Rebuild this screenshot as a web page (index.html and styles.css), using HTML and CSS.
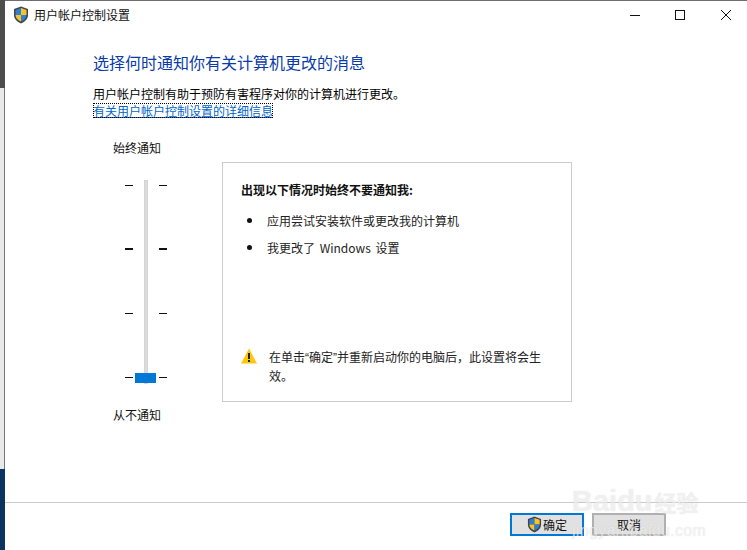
FILE: index.html
```html
<!DOCTYPE html>
<html lang="zh-CN">
<head>
<meta charset="utf-8">
<title>用户帐户控制设置</title>
<link rel="stylesheet" href="styles.css">
</head>
<body>
<div class="desktop-strip">
  <div class="strip-dark"></div>
  <div class="strip-light"></div>
  <div class="strip-navy"></div>
</div>
<main class="window">
  <header class="titlebar">
    <svg class="shield" viewBox="0 0 16 18" width="16" height="18" aria-hidden="true">
      <path d="M8 .5 1 3v6c0 4 3 6.800 7 8.500 4-1.700 7-4.500 7-8.500V3z" fill="#3d4650"/>
      <path d="M8 2 8 9H2.500V4z" fill="#2f7fd6"/>
      <path d="M8 2 13.500 4V9H8z" fill="#f7c325"/>
      <path d="M2.500 9H8v6.500C5 14.200 2.700 12.300 2.500 9z" fill="#f7c325"/>
      <path d="M8 9h5.500C13.300 12.300 11 14.200 8 15.500z" fill="#2f7fd6"/>
    </svg>
    <span class="title-text">用户帐户控制设置</span>
    <div class="controls">
      <svg class="ctl" viewBox="0 0 10 10" width="10" height="10" aria-hidden="true"><path d="M0 5.500h10" stroke="#111" fill="none"/></svg>
      <svg class="ctl ctl-max" viewBox="0 0 10 10" width="10" height="10" aria-hidden="true"><rect x=".5" y=".5" width="9" height="9" stroke="#111" fill="none"/></svg>
      <svg class="ctl" viewBox="0 0 10 10" width="10" height="10" aria-hidden="true"><path d="M0 0l10 10M10 0 0 10" stroke="#111" fill="none"/></svg>
    </div>
  </header>

  <section class="content">
    <h1 class="heading">选择何时通知你有关计算机更改的消息</h1>
    <p class="desc">用户帐户控制有助于预防有害程序对你的计算机进行更改。</p>
    <a class="link" href="#">有关用户帐户控制设置的详细信息</a>

    <div class="settings">
      <div class="slider-col">
        <div class="slider-label">始终通知</div>
        <div class="slider">
          <div class="track"></div>
          <div class="thumb"></div>
          <div class="tick-row"><i class="tick"></i><i class="tick"></i></div>
          <div class="tick-row thick"><i class="tick"></i><i class="tick"></i></div>
          <div class="tick-row"><i class="tick"></i><i class="tick"></i></div>
          <div class="tick-row"><i class="tick"></i><i class="tick"></i></div>
        </div>
        <div class="slider-label bottom">从不通知</div>
      </div>

      <div class="panel">
        <div class="panel-title">出现以下情况时始终不要通知我:</div>
        <ul class="panel-list">
          <li>应用尝试安装软件或更改我的计算机</li>
          <li class="mixed">我更改了 Windows 设置</li>
        </ul>
        <div class="notice">
          <svg class="warn" viewBox="0 0 16 16" width="16" height="16" aria-hidden="true">
            <path d="M8 .5 16 15.500H0z" fill="#fcc80f"/>
            <rect x="7" y="5" width="2" height="6" fill="#222"/>
            <rect x="7" y="12" width="2" height="2" fill="#222"/>
          </svg>
          <p class="notice-text">在单击<span class="quote">“</span>确定<span class="quote">”</span>并重新启动你的电脑后，此设置将会生效。</p>
        </div>
      </div>
    </div>
  </section>

  <footer class="footer">
    <button class="btn primary" type="button">
      <svg class="btn-shield" viewBox="0 0 16 18" width="15" height="17" aria-hidden="true">
        <path d="M8 .5 1 3v6c0 4 3 6.800 7 8.500 4-1.700 7-4.500 7-8.500V3z" fill="#3d4650"/>
        <path d="M8 2 8 9H2.500V4z" fill="#2f7fd6"/>
        <path d="M8 2 13.500 4V9H8z" fill="#f7c325"/>
        <path d="M2.500 9H8v6.500C5 14.200 2.700 12.300 2.500 9z" fill="#f7c325"/>
        <path d="M8 9h5.500C13.300 12.300 11 14.200 8 15.500z" fill="#2f7fd6"/>
      </svg>确定</button>
    <button class="btn" type="button">取消</button>
  </footer>
</main>
<div class="watermark">
  <div class="wm-logo">Baidu<span class="wm-cn">经验</span></div>
  <div class="wm-url">jingyan.baidu.com</div>
</div>
</body>
</html>
```

FILE: styles.css
```css
* { box-sizing: border-box; }
html, body { margin: 0; height: 100%; }
body {
  width: 747px;
  height: 550px;
  overflow: hidden;
  display: flex;
  position: relative;
  background: #fff;
  color: #000;
  font-family: "Noto Sans CJK SC", "Noto Sans", sans-serif;
  font-size: 12px;
}
.desktop-strip { width: 5px; flex: none; display: flex; flex-direction: column; }
.strip-dark { height: 88px; background: #4d4d4d; }
.strip-light { height: 381px; background: #e6e8ea; border-right: 1px solid #777; }
.strip-navy { flex: 1; background: #0b3560; }

.window {
  flex: 1;
  display: flex;
  flex-direction: column;
  min-width: 0;
  background: #fff;
  border-top: 1px solid #6e6e6e;
}
.titlebar {
  height: 29px;
  flex: none;
  display: flex;
  align-items: center;
  padding-left: 8px;
}
.shield { flex: none; margin-right: 5px; margin-top: -1px; }
.title-text { font-size: 12px; line-height: 16px; color: #111; margin-top: -2px; }
.controls {
  margin-left: auto;
  display: flex;
  gap: 35px;
  padding-right: 16px;
  margin-top: -1px;
}
.ctl { display: block; }
.ctl-max { margin-right: 1px; }

.content { flex: 1; padding: 22px 0 0 88px; min-height: 0; }
.heading {
  margin: 0;
  font-size: 16px;
  font-weight: 400;
  line-height: 20px;
  color: #0b3ba8;
}
.desc { margin: 14px 0 0; line-height: 16px; }
.link {
  display: inline-block;
  line-height: 15px;
  color: #0066cc;
  text-decoration: underline;
  outline: 1px dotted #000;
  outline-offset: -1px;
}

.settings { display: flex; margin-top: 14px; }
.slider-col { width: 129px; flex: none; padding-left: 20px; display: flex; flex-direction: column; }
.slider-label { line-height: 16px; color: #111; margin-top: 7px; }
.slider-label.bottom { margin-top: 23px; }
.slider {
  position: relative;
  width: 42px;
  height: 204px;
  margin: 24px 0 0 12px;
  display: flex;
  flex-direction: column;
  gap: 63px;
  padding-top: 5px;
}
.track {
  position: absolute;
  left: 19px;
  top: 0;
  bottom: 0;
  width: 4px;
  background: #dcdcdc;
  border: 1px solid #d4d6d6;
}
.thumb {
  position: absolute;
  left: 10px;
  bottom: 1px;
  width: 21px;
  height: 10px;
  background: #0078d7;
}
.tick-row { display: flex; justify-content: space-between; }
.tick { display: block; width: 8px; height: 1px; background: #111; }
.thick { margin-top: -1px; }
.thick .tick { height: 2px; }

.panel {
  width: 350px;
  height: 240px;
  margin-top: 29px;
  border: 1px solid #ccc;
  padding: 19px 18px 0;
  display: flex;
  flex-direction: column;
}
.panel-title { font-weight: 700; line-height: 16px; color: #111; }
.panel-list { margin: 15px 0 0; padding: 0 0 0 26px; list-style: none; }
.panel-list li { line-height: 16px; position: relative; color: #222; }
.panel-list li + li { margin-top: 11px; }
.panel-list li::before {
  content: "";
  position: absolute;
  left: -20px;
  top: 5px;
  width: 5px;
  height: 5px;
  border-radius: 50%;
  background: #111;
}
.mixed { word-spacing: 2px; }
.notice { display: flex; align-items: flex-start; margin-top: 92px; }
.warn { flex: none; margin: 0 12px 0 0; }
.notice-text { margin: 0; line-height: 18px; width: 280px; color: #222; }
.quote { font-family: "Liberation Sans", sans-serif; }

.footer {
  height: 48px;
  flex: none;
  border-top: 1px solid #ccc;
  display: flex;
  justify-content: flex-end;
  align-items: flex-start;
  gap: 8px;
  padding: 10px 81px 0 0;
}
.btn {
  width: 74px;
  height: 23px;
  padding: 0;
  display: flex;
  align-items: center;
  justify-content: center;
  background: #e1e1e1;
  border: 2px solid #b0b0b0;
  font: 12px/16px "Noto Sans CJK SC", "Noto Sans", sans-serif;
  color: #111;
}
.btn.primary { border-color: #0078d7; }
.btn-shield { margin-right: 1px; }

.watermark {
  position: absolute;
  left: 572px;
  top: 486px;
  pointer-events: none;
  color: rgba(255, 255, 255, .6);
  text-shadow: 0 0 1px rgba(130, 130, 130, .3);
  font-family: "Liberation Sans", "Noto Sans CJK SC", sans-serif;
  white-space: nowrap;
}
.wm-logo { font-size: 29px; line-height: 30px; font-weight: 700; }
.wm-cn { font-size: 22px; margin-left: 2px; }
.wm-url { font-size: 16px; line-height: 20px; margin-top: 2px; letter-spacing: .3px; }
```
